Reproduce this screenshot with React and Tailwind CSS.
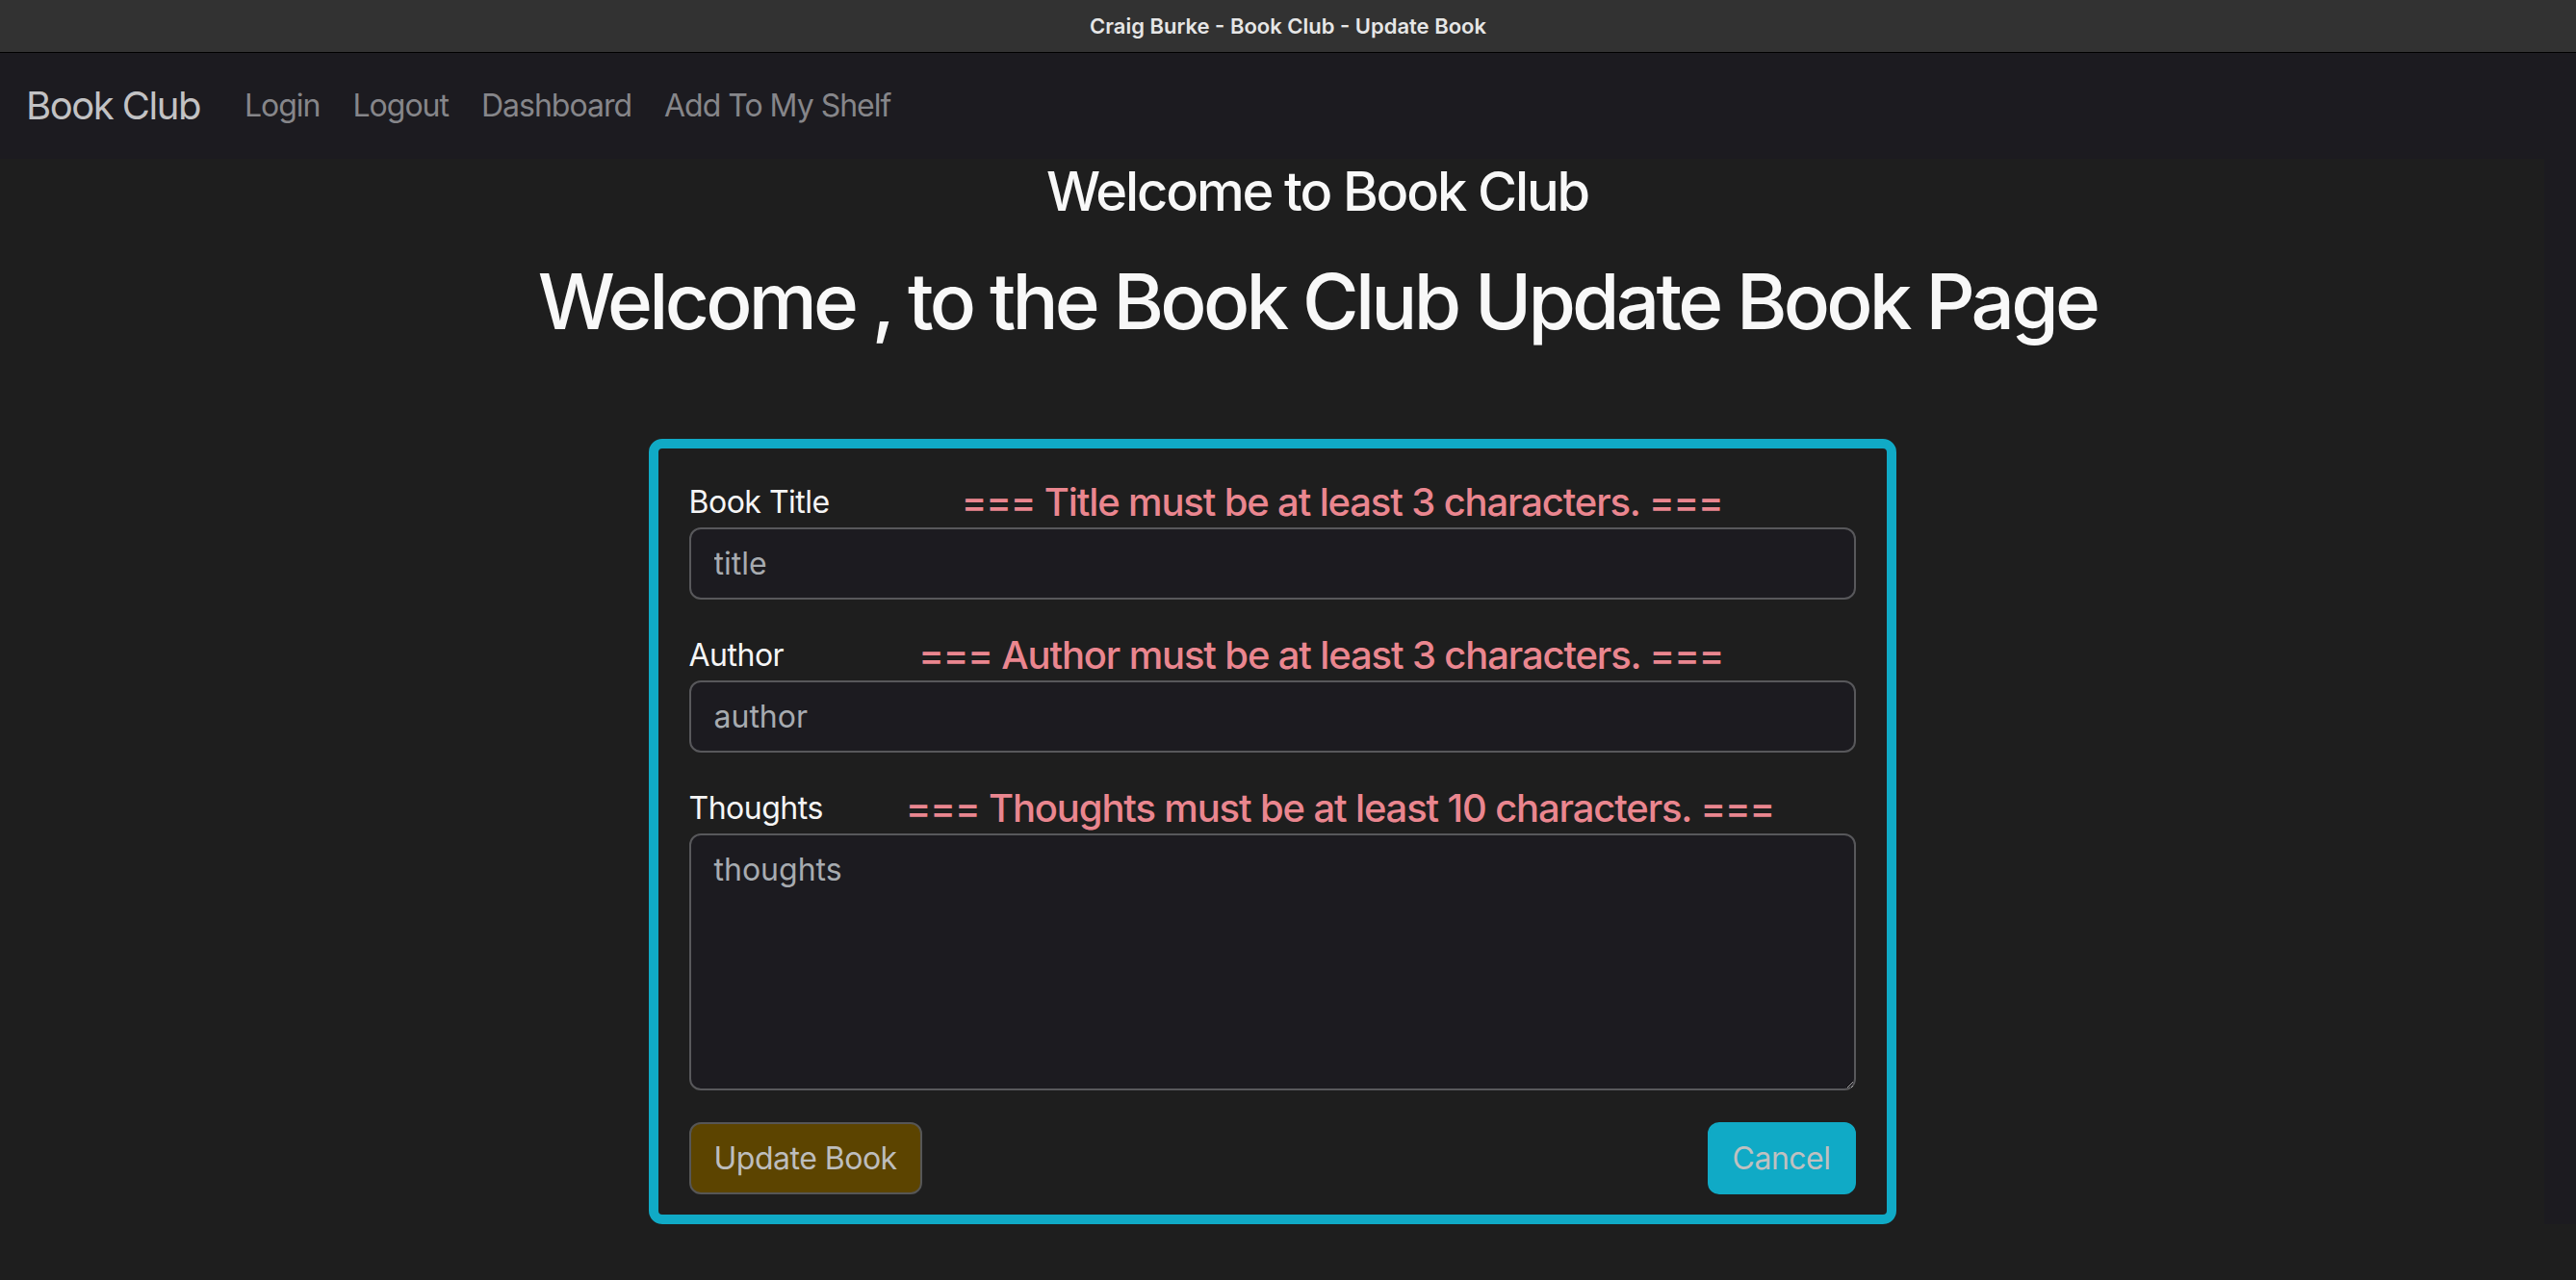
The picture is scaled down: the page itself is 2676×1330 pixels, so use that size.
import React from "react";

const ErrorRow = ({ label, error, gap }) => (
  <div className="flex items-end">
    <label className="text-[32px] leading-[40px] pb-[6px] tracking-[-0.5px] text-[#f5f5f5]">{label}</label>
    <span className={`${gap} text-[40px] leading-[52px] font-medium tracking-[-1.15px] text-[#ea868f]`}>{error}</span>
  </div>
);

const App = () => {
  return (
    <div
      className="min-h-[1330px] w-[2676px] bg-[#1e1e1e] flex flex-col"
      style={{ fontFamily: "Inter, 'Noto Sans', sans-serif" }}
    >
      {/* Window title bar */}
      <div className="h-[55px] bg-[#323232] border-b border-black flex items-center justify-center">
        <span className="text-[22px] font-semibold text-[#e6e6e6]">
          Craig Burke - Book Club - Update Book
        </span>
      </div>

      {/* Navbar */}
      <nav className="h-[110px] bg-[#1c1b20] flex items-center pl-[27px]">
        <a className="text-[40px] tracking-[-1.5px] text-[#c2c2c4] mr-[46px]">Book Club</a>
        <div className="flex gap-[34px] text-[32px] tracking-[-1px] text-[#86868a]">
          <a>Login</a>
          <a>Logout</a>
          <a>Dashboard</a>
          <a>Add To My Shelf</a>
        </div>
      </nav>

      {/* Main */}
      <div className="flex">
        <main className="flex-1 flex flex-col items-center">
          <div className="pl-[94px] text-center text-[#f8f8f8]">
            <h3 className="text-[56px] leading-[67px] font-medium tracking-[-0.038em] mt-[1px]">
              Welcome to Book Club
            </h3>
            <h1 className="text-[80px] leading-[96px] font-medium tracking-[-0.047em] mt-[32px]">
              Welcome , to the Book Club Update Book Page
            </h1>
          </div>

          <form className="mt-[95px] w-[1296px] border-[10px] border-[#10aac6] rounded-[14px] px-[32px] pt-[30px] pb-[21px]">
            <ErrorRow label="Book Title" error="=== Title must be at least 3 characters. ===" gap="ml-[137px]" />
            <input
              placeholder="title"
              className="block w-full h-[75px] border-2 border-[#58585b] rounded-[12px] bg-[#1c1b20] px-[24px] text-[32px] text-white placeholder:text-[#a7abb0] outline-none"
            />

            <div className="mt-[32px]">
              <ErrorRow label="Author" error="=== Author must be at least 3 characters. ===" gap="ml-[140px]" />
            </div>
            <input
              placeholder="author"
              className="block w-full h-[75px] border-2 border-[#58585b] rounded-[12px] bg-[#1c1b20] px-[24px] text-[32px] text-white placeholder:text-[#a7abb0] outline-none"
            />

            <div className="mt-[32px]">
              <ErrorRow label="Thoughts" error="=== Thoughts must be at least 10 characters. ===" gap="ml-[86px]" />
            </div>
            <textarea
              placeholder="thoughts"
              className="block w-full h-[267px] border-2 border-[#58585b] rounded-[12px] bg-[#1c1b20] px-[24px] py-[12px] text-[32px] leading-[48px] text-white placeholder:text-[#a7abb0] outline-none"
            />

            <div className="mt-[33px] flex justify-between">
              <button
                type="button"
                className="h-[75px] px-[24px] border-2 border-[#565656] bg-[#5c4400] rounded-[12px] text-[32px] tracking-[-0.5px] text-[#bdbdbd]"
              >
                Update Book
              </button>
              <button
                type="button"
                className="h-[75px] px-[24px] border-2 border-[#10aac6] bg-[#10aac6] rounded-[12px] text-[32px] tracking-[-0.5px] text-[#c0c0c0]"
              >
                Cancel
              </button>
            </div>
          </form>
        </main>
        <div className="w-[33px] bg-[#1c1b20]" />
      </div>
    </div>
  );
};

export default App;
